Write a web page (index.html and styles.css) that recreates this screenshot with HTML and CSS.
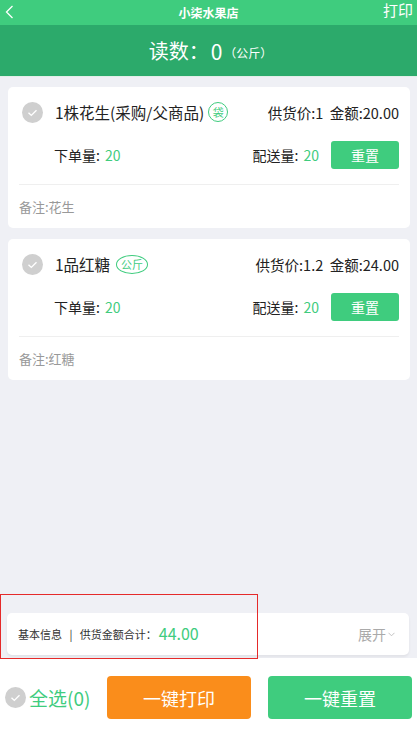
FILE: index.html
```html
<!DOCTYPE html>
<html lang="zh">
<head>
<meta charset="utf-8">
<title>小柒水果店</title>
<link rel="stylesheet" href="styles.css">
</head>
<body>
<div class="page">
  <header class="topbar">
    <span class="back"><svg width="9" height="14" viewBox="0 0 9 14"><path d="M7.5 1 L1.5 7 L7.5 13" fill="none" stroke="#fff" stroke-width="1.3"/></svg></span>
    <span class="title">小柒水果店</span>
    <span class="print">打印</span>
  </header>
  <div class="readbar">
    <span class="read-label">读数：</span><span class="read-val">0</span><span class="read-unit">（公斤）</span>
  </div>

  <main class="list">
    <section class="card">
      <div class="row row-top">
        <span class="check"><svg width="21" height="21" viewBox="0 0 21 21"><circle cx="10.5" cy="10.5" r="10.5" fill="#cfcfcf"/><path d="M6.5 10.8 L9.3 13.4 L14.5 8.2" fill="none" stroke="#fff" stroke-width="1.4"/></svg></span>
        <span class="name">1株花生(采购/父商品)</span>
        <span class="tag tag-round">袋</span>
        <span class="price">供货价:1&nbsp;&nbsp;金额:20.00</span>
      </div>
      <div class="row row-qty">
        <span class="qty">下单量: <em>20</em></span>
        <span class="qty qty-right">配送量: <em>20</em></span>
        <button class="reset">重置</button>
      </div>
      <div class="note">备注:花生</div>
    </section>

    <section class="card">
      <div class="row row-top">
        <span class="check"><svg width="21" height="21" viewBox="0 0 21 21"><circle cx="10.5" cy="10.5" r="10.5" fill="#cfcfcf"/><path d="M6.5 10.8 L9.3 13.4 L14.5 8.2" fill="none" stroke="#fff" stroke-width="1.4"/></svg></span>
        <span class="name">1品红糖</span>
        <span class="tag tag-oval">公斤</span>
        <span class="price">供货价:1.2&nbsp;&nbsp;金额:24.00</span>
      </div>
      <div class="row row-qty">
        <span class="qty">下单量: <em>20</em></span>
        <span class="qty qty-right">配送量: <em>20</em></span>
        <button class="reset">重置</button>
      </div>
      <div class="note">备注:红糖</div>
    </section>
  </main>

  <section class="summary">
    <span class="sum-text">基本信息&nbsp;&nbsp;&nbsp;|&nbsp;&nbsp;&nbsp;供货金额合计：</span>
    <span class="sum-val">44.00</span>
    <span class="expand">展开<svg width="7" height="5" viewBox="0 0 7 5"><path d="M0.5 0.8 L3.5 3.8 L6.5 0.8" fill="none" stroke="#bbb" stroke-width="0.9"/></svg></span>
  </section>

  <footer class="bottombar">
    <span class="all">
      <svg width="21" height="21" viewBox="0 0 21 21"><circle cx="10.5" cy="10.5" r="10.5" fill="#cfcfcf"/><path d="M6.5 10.8 L9.3 13.4 L14.5 8.2" fill="none" stroke="#fff" stroke-width="1.4"/></svg>
      <span class="all-text">全选(0)</span>
    </span>
    <button class="big big-orange">一键打印</button>
    <button class="big big-green">一键重置</button>
  </footer>

  <div class="highlight"></div>
</div>
</body>
</html>
```

FILE: styles.css
```css
* { box-sizing: border-box; }
html, body { margin: 0; padding: 0; }
body {
  font-family: "Noto Sans CJK SC", "Noto Sans", sans-serif;
  background: #eff0f5;
  color: #222;
}
.page {
  position: relative;
  width: 417px;
  height: 729px;
  display: flex;
  flex-direction: column;
  overflow: hidden;
}
.topbar {
  height: 25px;
  background: #3fcc7e;
  display: flex;
  align-items: center;
  justify-content: space-between;
  padding: 0 4px 0 5px;
  color: #fff;
  position: relative;
}
.back { display: flex; width: 30px; margin-top: -2px; }
.title {
  position: absolute;
  left: 0; right: 0;
  text-align: center;
  font-size: 12px;
  font-weight: bold;
  line-height: 25px;
  pointer-events: none;
}
.print { font-size: 15px; line-height: 20px; margin-top: -6px; }
.readbar {
  height: 52px;
  background: #2caa6b;
  color: #fff;
  display: flex;
  align-items: center;
  justify-content: center;
  padding-left: 4px;
  border-bottom: 1px solid #e2efe8;
}
.read-label { font-size: 20px; }
.read-val { font-size: 21px; margin-left: 2px; }
.read-unit { font-size: 12px; margin-left: 2px; margin-top: 3px; }

.list {
  flex: 1;
  padding: 10px 7px 0 8px;
  display: flex;
  flex-direction: column;
  gap: 11px;
}
.card {
  background: #fff;
  border-radius: 5px;
  height: 141px;
  padding: 0 11px;
  display: flex;
  flex-direction: column;
}
.row { display: flex; align-items: center; }
.row-top { height: 49px; padding-top: 1px; }
.check { display: flex; width: 36px; padding-left: 3px; }
.name { font-size: 15.5px; color: #222; }
.tag {
  display: inline-flex;
  align-items: center;
  justify-content: center;
  color: #3fcc7e;
  border: 1px solid #3fcc7e;
  font-size: 11px;
  margin-left: 4px;
}
.tag-round { width: 20px; height: 20px; border-radius: 50%; font-size: 11px; }
.tag-oval { width: 32px; height: 19px; border-radius: 50%; font-size: 11px; margin-left: 6px; }
.price { margin-left: auto; font-size: 14.5px; color: #222; }
.row-qty { height: 37px; padding-left: 35px; }
.qty { font-size: 14px; color: #222; }
.qty em { font-style: normal; color: #3fcc7e; margin-left: 2px; }
.qty-right { margin-left: auto; }
.reset {
  margin-left: 12px;
  width: 68px;
  height: 28px;
  border: none;
  border-radius: 3px;
  background: #3fcc7e;
  color: #fff;
  font-family: inherit;
  font-size: 14px;
  padding: 0;
}
.note {
  margin-top: 11px;
  border-top: 1px solid #efefef;
  height: 44px;
  display: flex;
  align-items: center;
  font-size: 13px;
  color: #999;
}

.summary {
  margin: 0 8px 3px 7px;
  height: 42px;
  background: #fff;
  border-radius: 5px;
  display: flex;
  align-items: center;
  padding: 0 14px 0 11px;
  box-shadow: 0 2px 3px rgba(0,0,0,0.06);
}
.sum-text { font-size: 11px; color: #333; }
.sum-val { font-size: 16px; color: #3fcc7e; margin-left: 2px; margin-top: -3px; }
.expand {
  margin-left: auto;
  font-size: 14px;
  color: #aaa;
  display: flex;
  align-items: center;
  gap: 2px;
}
.bottombar {
  height: 71px;
  background: #fff;
  display: flex;
  align-items: flex-start;
  padding: 18px 5px 0 5px;
}
.all {
  display: flex;
  align-items: center;
  height: 43px;
  width: 102px;
  gap: 3px;
}
.all-text { font-size: 19px; color: #3fcc7e; }
.big {
  width: 144px;
  height: 43px;
  border: none;
  border-radius: 4px;
  color: #fff;
  font-family: inherit;
  font-size: 18px;
  padding: 0;
}
.big-orange { background: #fa8d1b; }
.big-green { background: #3fcc7e; margin-left: 17px; }

.highlight {
  position: absolute;
  left: 0;
  top: 594px;
  width: 258px;
  height: 65px;
  border: 1.5px solid #e52a2a;
  pointer-events: none;
}
```
